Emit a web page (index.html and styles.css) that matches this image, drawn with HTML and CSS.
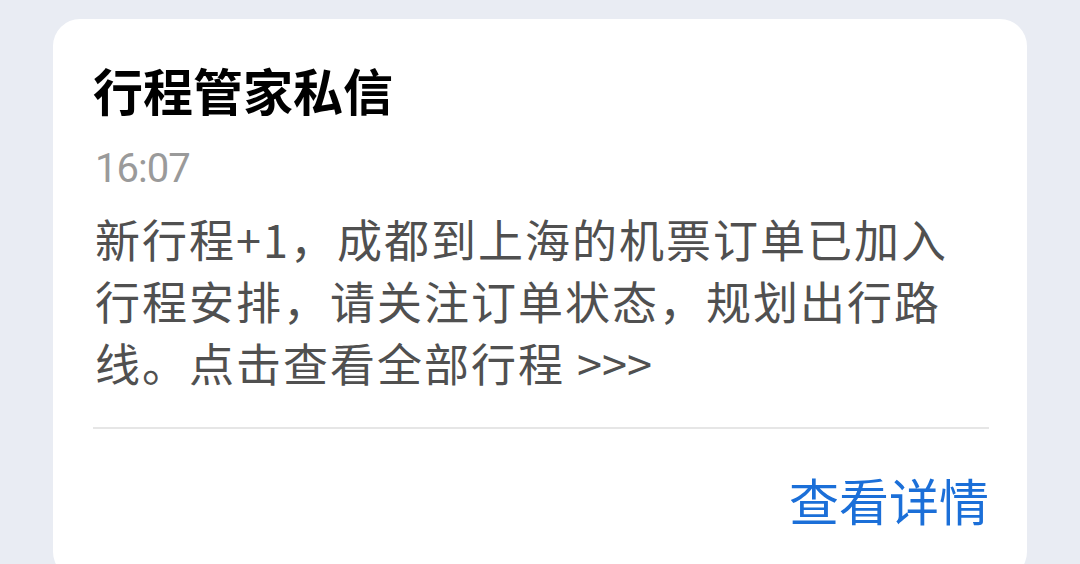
FILE: index.html
```html
<!DOCTYPE html>
<html lang="zh-CN">
<head>
<meta charset="utf-8">
<link rel="stylesheet" href="styles.css">
</head>
<body>
<div class="card">
  <div class="title">行程管家私信</div>
  <div class="time">16:07</div>
  <div class="content">新行程+1，成都到上海的机票订单已加入<br>行程安排，请关注订单状态，规划出行路<br>线。点击查看全部行程 <span class="more">&gt;&gt;&gt;</span></div>
  <div class="divider"></div>
  <div class="actions"><span class="action">查看详情</span></div>
</div>
</body>
</html>
```
FILE: styles.css
```css
html, body {
  margin: 0;
  padding: 0;
}
body {
  width: 1080px;
  height: 564px;
  overflow: hidden;
  background: #e9ecf3;
  font-family: "Noto Sans CJK SC", "Noto Sans", sans-serif;
}
.card {
  margin: 19px 0 0 53px;
  width: 974px;
  height: 560px;
  box-sizing: border-box;
  background: #ffffff;
  border-radius: 27px;
  padding: 40px 38px 0 40px;
}
.title {
  font-size: 50px;
  line-height: 60px;
  font-weight: 700;
  color: #000000;
}
.time {
  margin-top: 25px;
  padding-left: 2px;
  font-family: "Roboto", "Noto Sans", sans-serif;
  font-size: 40px;
  line-height: 50px;
  letter-spacing: -1px;
  color: #9a9a9a;
}
.content {
  margin-top: 14px;
  padding-left: 2px;
  font-size: 45px;
  line-height: 62px;
  letter-spacing: 2px;
  color: #505050;
}
.more {
  letter-spacing: 0;
}
.divider {
  margin-top: 33px;
  height: 2px;
  background: #e6e6e6;
}
.actions {
  display: flex;
  justify-content: flex-end;
  margin-top: 40px;
}
.action {
  font-size: 50px;
  line-height: 60px;
  color: #1b6fd8;
}
```
